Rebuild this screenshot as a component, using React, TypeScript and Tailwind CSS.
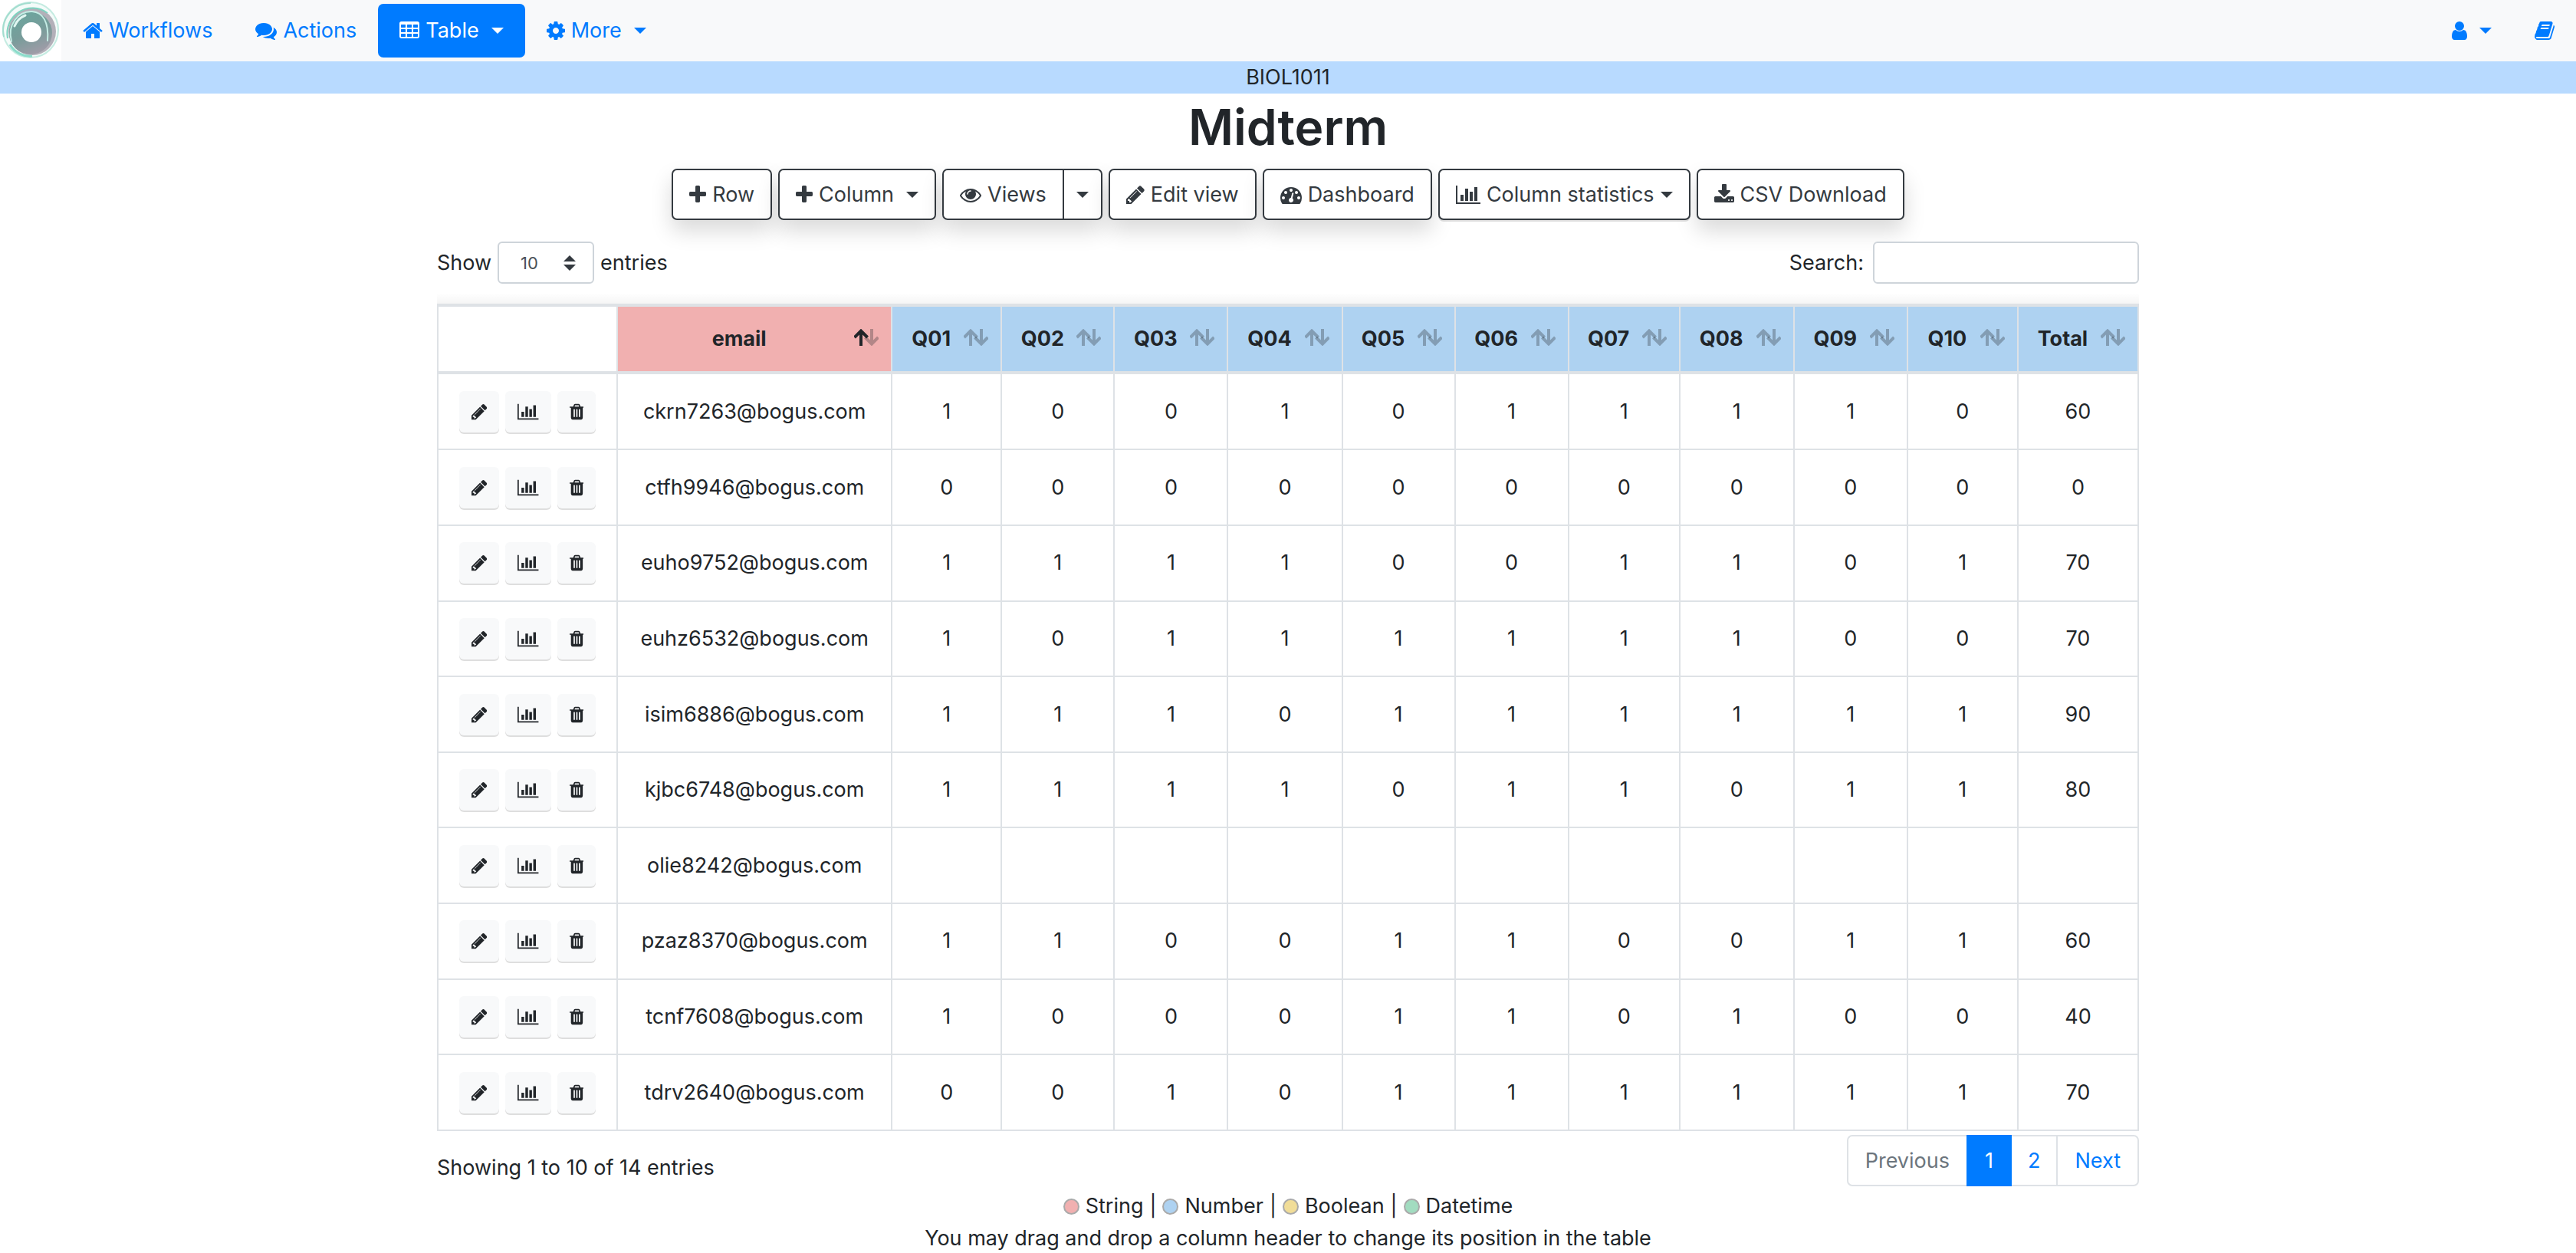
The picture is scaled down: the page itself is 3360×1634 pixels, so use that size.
import React from "react";

const ICONS = {
  home: {
    box: "64 0 1664 1792",
    d: "M1472 992v480q0 26-19 45t-45 19h-384v-384h-256v384h-384q-26 0-45-19t-19-45v-480q0-1 .5-3t.5-3l575-474 575 474q1 2 1 6zm223-69l-62 74q-8 9-21 11h-3q-13 0-21-7l-692-577-692 577q-12 8-24 7-13-2-21-11l-62-74q-8-10-7-23.5t11-21.5l719-599q32-26 76-26t76 26l244 204v-195q0-14 9-23t23-9h192q14 0 23 9t9 23v408l219 182q10 8 11 21.5t-7 23.5z",
  },
  comments: {
    box: "0 0 1792 1792",
    d: "M1408 768q0 139-94 257t-256.5 186.5-353.5 68.5q-86 0-176-16-124 88-278 128-36 9-86 16h-3q-11 0-20.5-8t-11.5-21q-1-3-1-6.5t.5-6.5 2-6l2.5-5 3.5-5.5 4-5 4.5-5 4-4.5q5-6 23-25t26-29.5 22.5-29 25-38.5 20.5-44q-124-72-195-177t-71-224q0-139 94-257t256.5-186.5 353.5-68.5 353.5 68.5 256.5 186.5 94 257zm384 256q0 120-71 224.5t-195 176.5q10 24 20.5 44t25 38.5 22.5 29 26 29.5 23 25q1 1 4 4.5t4.5 5 4 5 3.5 5.5l2.5 5 2 6 .5 6.5-1 6.5q-3 14-13 22t-22 7q-50-7-86-16-154-40-278-128-90 16-176 16-271 0-472-132 58 4 88 4 161 0 309-45t264-129q125-92 192-212t67-254q0-77-23-152 129 71 204 178t75 230z",
  },
  table: {
    box: "64 0 1664 1792",
    d: "M576 1376v-192q0-14-9-23t-23-9h-320q-14 0-23 9t-9 23v192q0 14 9 23t23 9h320q14 0 23-9t9-23zm0-384v-192q0-14-9-23t-23-9h-320q-14 0-23 9t-9 23v192q0 14 9 23t23 9h320q14 0 23-9t9-23zm512 384v-192q0-14-9-23t-23-9h-320q-14 0-23 9t-9 23v192q0 14 9 23t23 9h320q14 0 23-9t9-23zm-512-768v-192q0-14-9-23t-23-9h-320q-14 0-23 9t-9 23v192q0 14 9 23t23 9h320q14 0 23-9t9-23zm512 384v-192q0-14-9-23t-23-9h-320q-14 0-23 9t-9 23v192q0 14 9 23t23 9h320q14 0 23-9t9-23zm512 384v-192q0-14-9-23t-23-9h-320q-14 0-23 9t-9 23v192q0 14 9 23t23 9h320q14 0 23-9t9-23zm-512-768v-192q0-14-9-23t-23-9h-320q-14 0-23 9t-9 23v192q0 14 9 23t23 9h320q14 0 23-9t9-23zm512 384v-192q0-14-9-23t-23-9h-320q-14 0-23 9t-9 23v192q0 14 9 23t23 9h320q14 0 23-9t9-23zm0-384v-192q0-14-9-23t-23-9h-320q-14 0-23 9t-9 23v192q0 14 9 23t23 9h320q14 0 23-9t9-23zm128-320v1088q0 66-47 113t-113 47h-1344q-66 0-113-47t-47-113v-1088q0-66 47-113t113-47h1344q66 0 113 47t47 113z",
  },
  cog: {
    box: "128 0 1536 1792",
    d: "M1152 896q0-106-75-181t-181-75-181 75-75 181 75 181 181 75 181-75 75-181zm512-109v222q0 12-8 23t-20 13l-185 28q-19 54-39 91 35 50 107 138 10 12 10 25t-9 23q-27 37-99 108t-94 71q-12 0-26-9l-138-108q-44 23-91 38-16 136-29 186-7 28-36 28h-222q-14 0-24.5-8.5t-11.5-21.5l-28-184q-49-16-90-37l-141 107q-10 9-25 9-14 0-25-11-126-114-165-168-7-10-7-23 0-12 8-23 15-21 51-66.5t54-70.5q-27-50-41-99l-183-27q-13-2-21-12.5t-8-23.5v-222q0-12 8-23t19-13l186-28q14-46 39-92-40-57-107-138-10-12-10-24 0-10 9-23 26-36 98.5-107.5t94.5-71.5q13 0 26 10l138 107q44-23 91-38 16-136 29-186 7-28 36-28h222q14 0 24.5 8.5t11.5 21.5l28 184q49 16 90 37l142-107q9-9 24-9 13 0 25 10 129 119 165 170 7 8 7 22 0 12-8 23-15 21-51 66.5t-54 70.5q26 50 41 98l183 28q13 2 21 12.5t8 23.5z",
  },
  user: {
    box: "256 0 1280 1792",
    d: "M1536 1399q0 109-62.5 187t-150.5 78h-854q-88 0-150.5-78t-62.5-187q0-85 8.5-160.5t31.5-152 58.5-131 94-89 134.5-34.5q131 128 313 128t313-128q76 0 134.5 34.5t94 89 58.5 131 31.5 152 8.5 160.5zm-256-887q0 159-112.5 271.5t-271.5 112.5-271.5-112.5-112.5-271.5 112.5-271.5 271.5-112.5 271.5 112.5 112.5 271.5z",
  },
  book: {
    box: "64 0 1664 1792",
    d: "M1703 478q40 57 18 129l-275 906q-19 64-76.5 107.5t-122.5 43.5h-923q-77 0-148.5-53.5t-99.5-131.5q-24-67-2-127 0-4 3-27t4-37q1-8-3-21.5t-3-19.5q2-11 8-21t16.5-23.5 16.5-23.5q23-38 45-91.5t30-91.5q3-10 .5-30t-.5-28q3-11 17-28t17-23q21-36 42-92t25-90q1-9-2.5-32t.5-28q4-13 22-30.5t22-22.5q19-26 42.5-84.5t27.5-96.5q1-8-3-25.5t-2-26.5q2-8 9-18t18-23 17-21q8-12 16.5-30.5t15-35 16-36 19.5-32 26.5-23.5 36-11.5 47.5 5.5l-1 3q38-9 51-9h761q74 0 114 56t18 130l-274 906q-36 119-71.5 153.5t-128.5 34.5h-869q-27 0-38 15-11 16-1 43 24 70 144 70h923q29 0 56-15.5t35-41.5l300-987q7-22 5-57 38 15 59 43zm-1064 2q-4 13 2 22.5t20 9.5h608q13 0 25.5-9.5t16.5-22.5l21-64q4-13-2-22.5t-20-9.5h-608q-13 0-25.5 9.5t-16.5 22.5zm-83 256q-4 13 2 22.5t20 9.5h608q13 0 25.5-9.5t16.5-22.5l21-64q4-13-2-22.5t-20-9.5h-608q-13 0-25.5 9.5t-16.5 22.5z",
  },
  plus: {
    box: "192 0 1408 1792",
    d: "M1600 736v192q0 40-28 68t-68 28h-416v416q0 40-28 68t-68 28h-192q-40 0-68-28t-28-68v-416h-416q-40 0-68-28t-28-68v-192q0-40 28-68t68-28h416v-416q0-40 28-68t68-28h192q40 0 68 28t28 68v416h416q40 0 68 28t28 68z",
  },
  eye: {
    box: "0 0 1792 1792",
    d: "M1664 960q-152-236-381-353 61 104 61 225 0 185-131.5 316.5t-316.5 131.5-316.5-131.5-131.5-316.5q0-121 61-225-229 117-381 353 133 205 333.5 326.5t434.5 121.5 434.5-121.5 333.5-326.5zm-720-384q0-20-14-34t-34-14q-125 0-214.5 89.5t-89.5 214.5q0 20 14 34t34 14 34-14 14-34q0-86 61-147t147-61q20 0 34-14t14-34zm848 384q0 34-20 69-140 230-376.5 368.5t-499.5 138.5-499.5-139-376.5-368q-20-35-20-69t20-69q140-229 376.5-368t499.5-139 499.5 139 376.5 368q20 35 20 69z",
  },
  pencil: {
    box: "128 0 1536 1792",
    d: "M491 1536l91-91-235-235-91 91v107h128v128h107zm523-928q0-22-22-22-10 0-17 7l-542 542q-7 7-7 17 0 22 22 22 10 0 17-7l542-542q7-7 7-17zm-54-192l416 416-832 832h-416v-416zm683 96q0 53-37 90l-166 166-416-416 166-165q36-38 90-38 53 0 91 38l235 234q37 39 37 91z",
  },
  dashboard: {
    box: "0 0 1792 1792",
    d: "M384 1152q0-53-37.5-90.5t-90.5-37.5-90.5 37.5-37.5 90.5 37.5 90.5 90.5 37.5 90.5-37.5 37.5-90.5zm192-448q0-53-37.5-90.5t-90.5-37.5-90.5 37.5-37.5 90.5 37.5 90.5 90.5 37.5 90.5-37.5 37.5-90.5zm428 481l101-382q6-26-7.5-48.5t-38.5-29.5-48 6.5-30 39.5l-101 382q-60 5-107 43.5t-63 98.5q-20 77 20 146t117 89 146-20 89-117q16-60-6-117t-72-91zm660-33q0-53-37.5-90.5t-90.5-37.5-90.5 37.5-37.5 90.5 37.5 90.5 90.5 37.5 90.5-37.5 37.5-90.5zm-640-640q0-53-37.5-90.5t-90.5-37.5-90.5 37.5-37.5 90.5 37.5 90.5 90.5 37.5 90.5-37.5 37.5-90.5zm448 192q0-53-37.5-90.5t-90.5-37.5-90.5 37.5-37.5 90.5 37.5 90.5 90.5 37.5 90.5-37.5 37.5-90.5zm320 448q0 261-141 483-19 29-54 29h-1402q-35 0-54-29-141-221-141-483 0-182 71-348t191-286 286-191 348-71 348 71 286 191 191 286 71 348z",
  },
  chart: {
    box: "0 0 2048 1792",
    d: "M640 896v512h-256v-512h256zm384-512v1024h-256v-1024h256zm1024 1152v128h-2048v-1536h128v1408h1920zm-640-896v768h-256v-768h256zm384-384v1152h-256v-1152h256z",
  },
  download: {
    box: "64 0 1664 1792",
    d: "M1344 1344q0-26-19-45t-45-19-45 19-19 45 19 45 45 19 45-19 19-45zm256 0q0-26-19-45t-45-19-45 19-19 45 19 45 45 19 45-19 19-45zm128-224v320q0 40-28 68t-68 28h-1472q-40 0-68-28t-28-68v-320q0-40 28-68t68-28h465l135 136q58 56 136 56t136-56l136-136h464q40 0 68 28t28 68zm-325-569q17 41-14 70l-448 448q-18 19-45 19t-45-19l-448-448q-31-29-14-70 17-39 59-39h256v-448q0-26 19-45t45-19h256q26 0 45 19t19 45v448h256q42 0 59 39z",
  },
  trash: {
    box: "192 0 1408 1792",
    d: "M704 1376v-704q0-14-9-23t-23-9h-64q-14 0-23 9t-9 23v704q0 14 9 23t23 9h64q14 0 23-9t9-23zm256 0v-704q0-14-9-23t-23-9h-64q-14 0-23 9t-9 23v704q0 14 9 23t23 9h64q14 0 23-9t9-23zm256 0v-704q0-14-9-23t-23-9h-64q-14 0-23 9t-9 23v704q0 14 9 23t23 9h64q14 0 23-9t9-23zm-544-992h448l-48-117q-7-9-17-11h-317q-10 2-17 11zm928 32v64q0 14-9 23t-23 9h-96v948q0 83-47 143.5t-113 60.5h-832q-66 0-113-58.5t-47-141.5v-952h-96q-14 0-23-9t-9-23v-64q0-14 9-23t23-9h309l70-167q15-37 54-63t79-26h320q40 0 79 26t54 63l70 167h309q14 0 23 9t9 23z",
  },
};

function Icon({ name, className = "h-7" }: { name: keyof typeof ICONS; className?: string }) {
  return (
    <svg viewBox={ICONS[name].box} className={`w-auto shrink-0 fill-current ${className}`} aria-hidden="true">
      <path d={ICONS[name].d} />
    </svg>
  );
}

function Caret() {
  return (
    <svg viewBox="0 0 16 8" className="h-2 w-4 shrink-0 fill-current" aria-hidden="true">
      <path d="M0 0h16L8 8z" />
    </svg>
  );
}

function Logo() {
  return (
    <svg viewBox="0 0 80 80" className="size-20 shrink-0" aria-hidden="true">
      <defs>
        <linearGradient id="disc" x1="0.2" y1="0" x2="0.6" y2="1">
          <stop offset="0" stopColor="#6aa69e" />
          <stop offset="0.55" stopColor="#789c9a" />
          <stop offset="1" stopColor="#a09ca8" />
        </linearGradient>
      </defs>
      <rect width="80" height="80" fill="#fff" />
      <circle cx="40" cy="39" r="36" fill="#f4fbf9" stroke="#c4ebe1" strokeWidth="2" />
      <path d="M5 48A36 36 0 0 1 40 4" fill="none" stroke="#a3ddcf" strokeWidth="2" />
      <circle cx="42" cy="41" r="31" fill="#b3b0b9" />
      <path d="M10 50A33 33 0 0 1 62 17" fill="none" stroke="#7fd3c0" strokeWidth="2" />
      <circle cx="40" cy="43" r="28" fill="url(#disc)" />
      <path d="M13 58A30 30 0 0 0 42 73" fill="none" stroke="#8cdccb" strokeWidth="3" />
      <path d="M15 54C9 32 24 14 42 15c14 1 22 14 20 38" fill="none" stroke="#c4ece4" strokeWidth="2" strokeLinecap="round" />
      <path d="M19 34q4-10 14-14" fill="none" stroke="#e0f6f1" strokeWidth="3" strokeLinecap="round" />
      <circle cx="41" cy="42" r="13" fill="#fff" />
    </svg>
  );
}

function SortArrows({ active = false }: { active?: boolean }) {
  return (
    <span className="shrink-0 pb-1">
      <svg viewBox="0 0 32 22" className="h-[22px] w-8" fill="none" stroke="#212529" strokeWidth="4" aria-hidden="true">
        <path d="M23 0v19M14.500 11l8.500 8.500L31.500 11" opacity="0.3" />
        <path d="M9 22V3M0.500 11L9 2.500 17.500 11" opacity={active ? 1 : 0.3} />
      </svg>
    </span>
  );
}

const outline =
  "flex h-[67px] items-center border-2 border-[#343a40] bg-white text-[#343a40]";
const lifted = "shadow-[0_14px_28px_rgba(0,0,0,0.15)]";

function ToolButton({ icon, label, caret, flat }: { icon: keyof typeof ICONS; label: string; caret?: boolean; flat?: boolean }) {
  return (
    <button
      type="button"
      className={`${outline} gap-2 rounded-[7px] px-[21px] ${flat ? "relative shadow-[0_2px_0_rgba(0,0,0,0.13)]" : lifted}`}
    >
      <Icon name={icon} />
      {label}
      {caret && (
        <span className={flat ? "" : "pl-2"}>
          <Caret />
        </span>
      )}
    </button>
  );
}

function RowAction({ icon, label }: { icon: keyof typeof ICONS; label: string }) {
  return (
    <button
      type="button"
      aria-label={label}
      className="flex h-[54px] items-center rounded-md bg-[#f8f9fa] px-4 text-[#212529] shadow-[0_2px_0_rgba(0,0,0,0.13)]"
    >
      <Icon name={icon} className="h-6" />
    </button>
  );
}

const COLUMNS = ["Q01", "Q02", "Q03", "Q04", "Q05", "Q06", "Q07", "Q08", "Q09", "Q10", "Total"];

const COLUMN_WIDTHS = [
  "w-[234px]", "w-[358px]", "w-[143px]", "w-[147px]", "w-[148px]", "w-[149px]", "w-[147px]",
  "w-[148px]", "w-[145px]", "w-[149px]", "w-[148px]", "w-[144px]", "w-[157px]",
];

const ROWS: [string, string[]][] = [
  ["ckrn7263@bogus.com", ["1", "0", "0", "1", "0", "1", "1", "1", "1", "0", "60"]],
  ["ctfh9946@bogus.com", ["0", "0", "0", "0", "0", "0", "0", "0", "0", "0", "0"]],
  ["euho9752@bogus.com", ["1", "1", "1", "1", "0", "0", "1", "1", "0", "1", "70"]],
  ["euhz6532@bogus.com", ["1", "0", "1", "1", "1", "1", "1", "1", "0", "0", "70"]],
  ["isim6886@bogus.com", ["1", "1", "1", "0", "1", "1", "1", "1", "1", "1", "90"]],
  ["kjbc6748@bogus.com", ["1", "1", "1", "1", "0", "1", "1", "0", "1", "1", "80"]],
  ["olie8242@bogus.com", ["", "", "", "", "", "", "", "", "", "", ""]],
  ["pzaz8370@bogus.com", ["1", "1", "0", "0", "1", "1", "0", "0", "1", "1", "60"]],
  ["tcnf7608@bogus.com", ["1", "0", "0", "0", "1", "1", "0", "1", "0", "0", "40"]],
  ["tdrv2640@bogus.com", ["0", "0", "1", "0", "1", "1", "1", "1", "1", "1", "70"]],
];

const TYPES = [
  ["String", "bg-[#f1b0b0]"],
  ["Number", "bg-[#aed2f1]"],
  ["Boolean", "bg-[#f1dd98]"],
  ["Datetime", "bg-[#a2dcc0]"],
];

export default function App() {
  return (
    <div className="bg-white font-[Inter,'Liberation_Sans',sans-serif] text-[27px] leading-[42px] text-[#212529]">
      <nav className="flex h-20 items-center justify-between bg-[#f8f9fa] text-[#007bff]">
        <div className="flex items-center">
          <a href="#home" aria-label="Home">
            <Logo />
          </a>
          <a href="#workflows" className="flex items-center gap-2 px-7">
            <Icon name="home" />
            Workflows
          </a>
          <a href="#actions" className="flex items-center gap-2 px-7">
            <Icon name="comments" />
            Actions
          </a>
          <button type="button" className="flex h-[70px] items-center gap-2 rounded-[7px] bg-[#007bff] px-7 text-white">
            <Icon name="table" />
            Table
            <span className="pl-2">
              <Caret />
            </span>
          </button>
          <button type="button" className="flex items-center gap-2 px-7">
            <Icon name="cog" />
            More
            <span className="pl-2">
              <Caret />
            </span>
          </button>
        </div>
        <div className="flex items-center gap-14 pr-7">
          <button type="button" aria-label="Account" className="flex items-center gap-4">
            <Icon name="user" />
            <Caret />
          </button>
          <a href="#docs" aria-label="Documentation">
            <Icon name="book" />
          </a>
        </div>
      </nav>
      <div className="bg-[#b8daff] text-center">BIOL1011</div>

      <h1 className="pt-[2px] text-center text-[64px] leading-[84px] font-semibold">Midterm</h1>

      <div className="mt-3 flex justify-center gap-2">
        <ToolButton icon="plus" label="Row" />
        <ToolButton icon="plus" label="Column" caret />
        <div className={`flex rounded-[7px] ${lifted}`}>
          <button type="button" className={`${outline} gap-2 rounded-l-[7px] px-[21px]`}>
            <Icon name="eye" />
            Views
          </button>
          <button type="button" aria-label="More views" className={`${outline} -ml-[2px] rounded-r-[7px] px-4`}>
            <Caret />
          </button>
        </div>
        <ToolButton icon="pencil" label="Edit view" />
        <ToolButton icon="dashboard" label="Dashboard" />
        <ToolButton icon="chart" label="Column statistics" caret flat />
        <ToolButton icon="download" label="CSV Download" />
      </div>

      <main className="mx-auto max-w-[2280px] px-[30px] pt-7">
        <div className="flex items-center justify-between">
          <label className="flex items-center gap-2">
            Show
            <span className="relative flex">
              <select className="h-[55px] w-[126px] appearance-none rounded-md border-2 border-[#ced4da] bg-white pl-7 text-[22px] text-[#495057]">
                <option>10</option>
              </select>
              <svg viewBox="0 0 16 20" className="pointer-events-none absolute top-[18px] right-6 h-5 w-4 fill-[#343a40]" aria-hidden="true">
                <path d="M0 8L8 0l8 8zM0 12h16l-8 8z" />
              </svg>
            </span>
            entries
          </label>
          <label className="flex items-center gap-3">
            Search:
            <input type="search" className="h-[55px] w-[347px] rounded-md border-2 border-[#ced4da] bg-white px-3" />
          </label>
        </div>

        <div className="mt-3 h-[14px] bg-linear-to-t from-black/4 to-transparent" />
        <table className="h-[1079px] w-full table-fixed border-collapse text-center">
          <colgroup>
            {COLUMN_WIDTHS.map((w, i) => (
              <col key={i} className={w} />
            ))}
          </colgroup>
          <thead>
            <tr className="h-[88px]">
              <th aria-label="Actions" className="border-x-2 border-y-4 border-[#dee2e6]" />
              <th className="border-x-2 border-y-4 border-[#dee2e6] bg-[#f1b0b0] p-0 font-bold">
                <div className="flex items-center gap-3 pr-4 pl-5">
                  <span className="grow">email</span>
                  <SortArrows active />
                </div>
              </th>
              {COLUMNS.map((c) => (
                <th key={c} className="border-x-2 border-y-4 border-[#dee2e6] bg-[#aed2f1] p-0 font-bold">
                  <div className="flex items-center gap-3 pr-4 pl-5">
                    <span className="grow">{c}</span>
                    <SortArrows />
                  </div>
                </th>
              ))}
            </tr>
          </thead>
          <tbody>
            {ROWS.map(([email, values]) => (
              <tr key={email}>
                <td className="border-2 border-[#dee2e6] p-0">
                  <div className="flex justify-center gap-2">
                    <RowAction icon="pencil" label={`Edit ${email}`} />
                    <RowAction icon="chart" label={`Statistics for ${email}`} />
                    <RowAction icon="trash" label={`Delete ${email}`} />
                  </div>
                </td>
                <td className="border-2 border-[#dee2e6] p-0">{email}</td>
                {values.map((v, i) => (
                  <td key={i} className="border-2 border-[#dee2e6] p-0">
                    {v}
                  </td>
                ))}
              </tr>
            ))}
          </tbody>
        </table>

        <div className="mt-[5px] flex items-start justify-between">
          <p className="pt-[22px]">Showing 1 to 10 of 14 entries</p>
          <div className="flex h-[67px] text-[#007bff]">
            <button type="button" disabled className="rounded-l-[7px] border-2 border-r-0 border-[#dee2e6] px-[22px] text-[#6c757d]">
              Previous
            </button>
            <button type="button" aria-current="page" className="bg-[#007bff] px-6 text-white">
              1
            </button>
            <button type="button" className="border-y-2 border-[#dee2e6] px-[21px]">
              2
            </button>
            <button type="button" className="rounded-r-[7px] border-2 border-[#dee2e6] px-[22px]">
              Next
            </button>
          </div>
        </div>
      </main>

      <footer className="pt-[5px] text-center">
        <div className="flex items-center justify-center gap-2">
          {TYPES.map(([name, color], i) => (
            <React.Fragment key={name}>
              {i > 0 && <span>|</span>}
              <span className={`size-[21px] rounded-full border-2 border-[#aaaaaa] ${color}`} />
              <span>{name}</span>
            </React.Fragment>
          ))}
        </div>
        <p>You may drag and drop a column header to change its position in the table</p>
      </footer>
    </div>
  );
}
